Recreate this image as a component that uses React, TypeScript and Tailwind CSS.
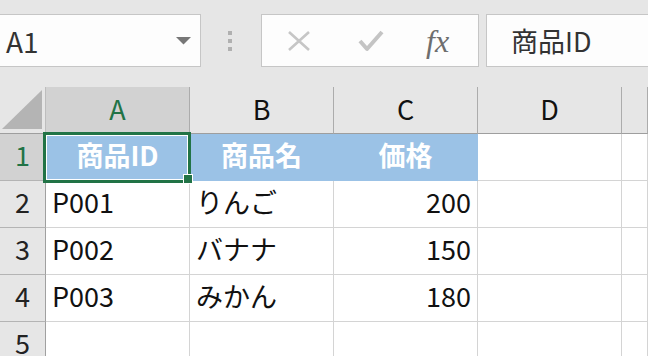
import React from 'react';

const cols = ['A', 'B', 'C', 'D', ''];

const rows = [
  { n: 2, a: 'P001', b: 'りんご', c: '200' },
  { n: 3, a: 'P002', b: 'バナナ', c: '150' },
  { n: 4, a: 'P003', b: 'みかん', c: '180' },
  { n: 5, a: '', b: '', c: '' },
];

const cell = 'h-[47px] border-r border-b border-[#d4d4d4] bg-white flex items-center px-[6px] pb-[4px] text-[27px] text-[#111]';
const rowHead = 'h-[47px] border-r border-r-[#a0a0a0] border-b border-b-[#b4b4b4] bg-[#e6e6e6] flex items-center justify-center pb-[4px] text-[27px] text-[#222]';

const App = () => {
  return (
    <div
      className="w-[648px] h-[356px] overflow-hidden bg-[#e6e6e6]"
      style={{ fontFamily: '"Noto Sans CJK JP", "Noto Sans", sans-serif' }}
    >
      {/* formula bar */}
      <div className="flex items-start pt-[14px] h-[87px]">
        <div className="w-[201px] h-[53px] bg-[#fdfdfd] border-y border-r border-[#c6c6c6] flex items-center pl-[6px] pr-[9px]">
          <span className="flex-1 text-[28px] text-[#333] leading-none">A1</span>
          <svg width="15" height="8" viewBox="0 0 15 8">
            <polygon points="0,0 15,0 7.5,7.5" fill="#777" />
          </svg>
        </div>
        <div className="w-[60px] h-[53px] flex flex-col items-center justify-center gap-[4px] pr-[2px]">
          <div className="w-[4px] h-[4px] bg-[#b0b0b0]" />
          <div className="w-[4px] h-[4px] bg-[#b0b0b0]" />
          <div className="w-[4px] h-[4px] bg-[#b0b0b0]" />
        </div>
        <div className="w-[218px] h-[53px] bg-[#fdfdfd] border border-[#c6c6c6] flex items-center">
          <svg className="ml-[25px]" width="24" height="20" viewBox="0 0 24 20">
            <path d="M2 1 L22 19 M22 1 L2 19" stroke="#c6c6c6" strokeWidth="2.6" fill="none" />
          </svg>
          <svg className="ml-[47px]" width="26" height="22" viewBox="0 0 26 22">
            <path d="M2 11 L9 19 L24 2" stroke="#c4c4c4" strokeWidth="4" fill="none" strokeLinejoin="round" />
          </svg>
          <span
            className="ml-[42px] text-[32px] italic text-[#6e6e6e] leading-none"
            style={{ fontFamily: '"Liberation Serif", serif' }}
          >
            fx
          </span>
        </div>
        <div className="ml-[7px] flex-1 h-[53px] bg-[#fdfdfd] border-y border-l border-[#c6c6c6] flex items-center pl-[24px]">
          <span className="text-[27px] text-[#333] leading-none">商品ID</span>
        </div>
      </div>

      {/* sheet */}
      <div className="grid grid-cols-[46px_144px_144px_144px_144px_1fr]">
        {/* column headers */}
        <div className="h-[47px] border-r border-r-[#bdbdbd] border-b border-b-[#9e9e9e] bg-[#e6e6e6] flex items-end justify-end pb-[4px] pr-[3px]">
          <svg width="40" height="39" viewBox="0 0 40 39">
            <polygon points="40,0 40,39 0,39" fill="#b4b4b4" />
          </svg>
        </div>
        {cols.map((c, i) => (
          <div
            key={i}
            className={
              'h-[47px] border-r border-r-[#acacac] border-b border-b-[#9e9e9e] flex items-center justify-center pb-[2px] text-[27px] ' +
              (c === 'A' ? 'bg-[#d2d2d2] text-[#217346]' : 'bg-[#e6e6e6] text-[#111]')
            }
          >
            {c}
          </div>
        ))}

        {/* row 1 */}
        <div className="h-[47px] border-r border-r-[#a0a0a0] border-b border-b-[#b4b4b4] bg-[#d2d2d2] flex items-center justify-center pb-[4px] text-[27px] text-[#217346]">
          1
        </div>
        <div className="relative z-10 h-[47px] border-r border-b border-[#9bc2e6] bg-[#9bc2e6] flex items-center justify-center pb-[3px] text-[27px] font-bold text-white">
          商品ID
          <div className="absolute -left-[3px] -top-[2px] -right-[2px] -bottom-[3px] border-[3px] border-[#217346]">
            <div className="w-full h-full border border-white" />
          </div>
          <div className="absolute -right-[4px] -bottom-[4px] w-[10px] h-[10px] bg-[#217346] border border-white" />
        </div>
        <div className="h-[47px] border-r border-b border-[#9bc2e6] bg-[#9bc2e6] flex items-center justify-center pb-[3px] text-[27px] font-bold text-white">
          商品名
        </div>
        <div className="h-[47px] border-r border-b border-[#9bc2e6] bg-[#9bc2e6] flex items-center justify-center pb-[3px] text-[27px] font-bold text-white">
          価格
        </div>
        <div className={cell} />
        <div className={cell} />

        {/* data rows */}
        {rows.map((r) => (
          <React.Fragment key={r.n}>
            <div className={rowHead}>{r.n}</div>
            <div className={cell}>{r.a}</div>
            <div className={cell}>{r.b}</div>
            <div className={cell + ' justify-end'}>{r.c}</div>
            <div className={cell} />
            <div className={cell} />
          </React.Fragment>
        ))}
      </div>
    </div>
  );
};

export default App;
